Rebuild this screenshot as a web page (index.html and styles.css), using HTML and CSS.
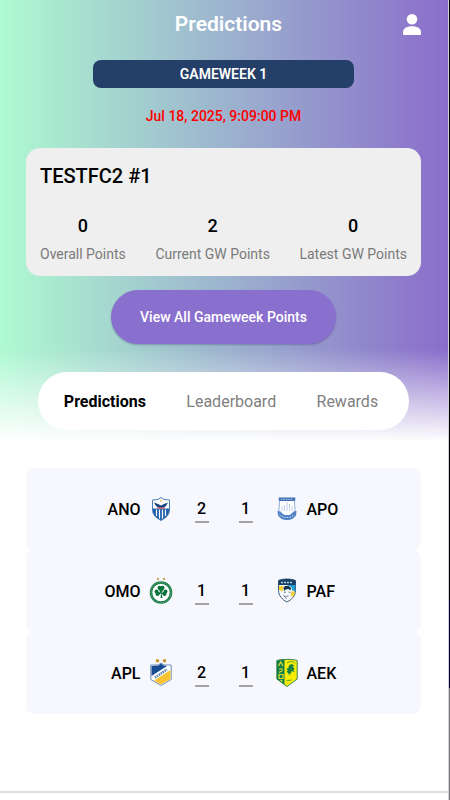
FILE: index.html
```
<!DOCTYPE html>
<html lang="en">
<head>
  <meta charset="UTF-8">
  <meta name="viewport" content="width=device-width, initial-scale=1">
  <title>Predictions</title>
  <link rel="stylesheet" href="styles.css">
</head>
<body>
  <div class="screen">
    <header class="hero">
      <div class="topbar">
        <h1 class="page-title">Predictions</h1>
        <a href="#profile" class="profile" aria-label="Profile">
          <svg width="18" height="21" viewBox="0 0 18 21" fill="#fff">
            <circle cx="9" cy="5.3" r="5.3"/>
            <path d="M0 20v-1.500C0 14.500 3.500 12.300 9 12.300s9 2.200 9 6.200V20q0 1-1 1H1q-1 0-1-1z"/>
          </svg>
        </a>
      </div>

      <div class="gameweek">GAMEWEEK 1</div>
      <time class="deadline">Jul 18, 2025, 9:09:00 PM</time>

      <section class="team-card">
        <h2 class="team-name">TESTFC2 #1</h2>
        <div class="stats">
          <div class="stat"><strong>0</strong><span>Overall Points</span></div>
          <div class="stat"><strong>2</strong><span>Current GW Points</span></div>
          <div class="stat"><strong>0</strong><span>Latest GW Points</span></div>
        </div>
      </section>

      <button class="view-all" type="button">View All Gameweek Points</button>

      <nav class="tabs">
        <button class="tab active" type="button">Predictions</button>
        <button class="tab" type="button">Leaderboard</button>
        <button class="tab" type="button">Rewards</button>
      </nav>
    </header>

    <main class="matches">
      <div class="match">
        <div class="team home">
          <span>ANO</span>
          <svg class="crest" viewBox="0 0 24 32">
            <path d="M12 4.500L15 6.500 20.500 7v10c0 5-4 8-8.500 10.500C7.500 25 3.500 22 3.500 17V7L9 6.500z" fill="#fff" stroke="#4d7cb8"/>
            <path d="M4 15.500h16V18c0 4-3.500 7-8 9.200C7.500 25 4 22 4 18z" fill="#1f5fac"/>
            <path d="M7.500 16.500v6.500M10.500 16.500v9M13.500 16.500v9M16.500 16.500v6.500" stroke="#fff" stroke-width="1.200"/>
            <path d="M5 9.500l4 1.500 3 1.500 3-1.500 4-1.500-2 3.500-3 2h-4l-3-2z" fill="#174582"/>
            <path d="M8 15h8" stroke="#d95d62" stroke-width="1.200"/>
            <circle cx="12" cy="7.800" r="1" fill="#efc54e"/>
          </svg>
        </div>
        <div class="scores">
          <input class="score" type="text" inputmode="numeric" value="2" aria-label="ANO score">
          <input class="score" type="text" inputmode="numeric" value="1" aria-label="APO score">
        </div>
        <div class="team away">
          <svg class="crest" viewBox="0 0 24 32">
            <path d="M4 6h16l-.5 3 .8 11c-1 4-4 5.800-8.300 6.500C8 25.800 4.800 24 3.700 20L4.500 9z" fill="#fff" stroke="#8fb0da"/>
            <path d="M3.500 4.500h17L19.600 8H4.400z" fill="#3d70b3"/>
            <path d="M6 6.300h12" stroke="#c9d8ec" stroke-dasharray="1.500 1"/>
            <path d="M12 9v9M9.500 12v6M14.500 11v7M7 13v5M17 13v5" stroke="#bdcfe6"/>
            <path d="M2.500 18l3 .5c2 3 4 3.500 6.500 3.500s4.500-.5 6.500-3.500l3-.5-.5 4.500c-2.500 3-5 4.500-9 4.500s-6.500-1.500-9-4.500z" fill="#4f82c4"/>
            <path d="M4.500 21.500c4 4 11 4 15 0" fill="none" stroke="#dce7f5" stroke-dasharray="1.500 1.200"/>
          </svg>
          <span>APO</span>
        </div>
      </div>

      <div class="match">
        <div class="team home">
          <span>OMO</span>
          <svg class="crest" viewBox="0 0 24 32">
            <circle cx="9" cy="4" r="1.200" fill="#c9a460"/>
            <circle cx="15" cy="4" r="1.200" fill="#c9a460"/>
            <circle cx="12" cy="17.500" r="10" fill="#fff" stroke="#167b45" stroke-width="2.600"/>
            <circle cx="12" cy="17.500" r="10" fill="none" stroke="#9cc8af" stroke-width="1" stroke-dasharray="1 1.500"/>
            <g fill="#08723b">
              <circle cx="10.500" cy="12.800" r="2"/><circle cx="13.500" cy="12.800" r="2"/>
              <circle cx="7.500" cy="16.500" r="2"/><circle cx="8.500" cy="19" r="2"/>
              <circle cx="16.500" cy="16.500" r="2"/><circle cx="15.500" cy="19" r="2"/>
              <path d="M9 13.500h6L12.500 18l4.500-2-1 4.500-3.500-2 1 4.500h-2l.5-4.500-4 2-1-4.500 4.500 1.500z"/>
            </g>
          </svg>
        </div>
        <div class="scores">
          <input class="score" type="text" inputmode="numeric" value="1" aria-label="OMO score">
          <input class="score" type="text" inputmode="numeric" value="1" aria-label="PAF score">
        </div>
        <div class="team away">
          <svg class="crest" viewBox="0 0 24 32">
            <path d="M3.500 5.500C8 3.500 16 3.500 20.500 5.500v10c0 5-3.500 9-8.500 11.500C7 24.500 3.500 20.500 3.500 15.500z" fill="#f5f8fb" stroke="#3c5b7b"/>
            <path d="M3.500 5.500C8 3.500 16 3.500 20.500 5.500V10H3.500z" fill="#173e64"/>
            <path d="M6 7.500h12" stroke="#b8d4df" stroke-width="1.500" stroke-dasharray="2 1"/>
            <path d="M12 10h8.200v7l-3-2-1-3z" fill="#1d9fd3"/>
            <path d="M4 10.500l5 1-1.500 5L4 15z" fill="#f5cf30"/>
            <path d="M17 16l3.200 1-2.200 5-2.500-1.500z" fill="#f5cf30"/>
            <path d="M8.500 13c1-3 6.500-3 7.500.5l-.5 2-2-1.500-3 .5-1 2z" fill="#183450"/>
            <path d="M9 17.500l2-.5M13.500 17l2 .5M10.500 21.500l3-.5M8.500 20l3 4" fill="none" stroke="#48647d" stroke-width=".8"/>
          </svg>
          <span>PAF</span>
        </div>
      </div>

      <div class="match">
        <div class="team home">
          <span>APL</span>
          <svg class="crest" viewBox="0 0 24 32">
            <circle cx="8.500" cy="3.800" r="1.800" fill="#c69531"/>
            <circle cx="15.500" cy="3.800" r="1.800" fill="#c69531"/>
            <path d="M12 6l3 2h7.200v14.500L12 28.500 1.800 22.500V8H9z" fill="#fff" stroke="#6d8db7"/>
            <path d="M12 6.500L14.500 8.500 18 9 2.500 19V9l7-.5z" fill="#174b92"/>
            <path d="M21.500 13v9L12 27.500 5 23.500z" fill="#fac331"/>
            <path d="M6 20.500L18 12.500" stroke="#597eae" stroke-width="2.400" stroke-dasharray="1.500 .8"/>
          </svg>
        </div>
        <div class="scores">
          <input class="score" type="text" inputmode="numeric" value="2" aria-label="APL score">
          <input class="score" type="text" inputmode="numeric" value="1" aria-label="AEK score">
        </div>
        <div class="team away">
          <svg class="crest" viewBox="0 0 24 32">
            <path d="M1.800 3.500C6 2 18 2 22.200 3.500v18.500L12 29.500 1.800 22z" fill="#f8ec09" stroke="#398651"/>
            <path d="M2 3.500l7.500-1v25L2 22z" fill="#127d4a"/>
            <path d="M3.500 9l2.200-4 2.300 4M4 12h4M4 15.500l3.500-2M4 17.500h4v4H4zM5.500 23l2 1.500" fill="none" stroke="#dfe12b" stroke-width="1.200"/>
            <path d="M11.500 12l2-1.500.5-2 2.500-1.500 3 1.500-2 1 2 2-1 1.500 1 2-3-1-.5 3-1.500-1v3l-1.500-3-1.500-1.500 1.500-1z" fill="#198146"/>
            <path d="M12 6c3-2 6-2 8 .5M11.500 24c2-1.500 3 0 5-1" fill="none" stroke="#599c35"/>
          </svg>
          <span>AEK</span>
        </div>
      </div>
    </main>

    <footer class="bottom-bar"></footer>
  </div>
</body>
</html>
```

FILE: styles.css
```
* {
  box-sizing: border-box;
}

body {
  margin: 0;
  padding-right: 1px;
  background: linear-gradient(to bottom, #000 0 75%, #00003c 75% 86%, #777 86%);
  font-family: Roboto, "Liberation Sans", sans-serif;
  color: #000;
}

button,
input {
  font-family: inherit;
  border: none;
}

button {
  cursor: pointer;
}

.screen {
  display: flex;
  flex-direction: column;
  min-height: 100vh;
  background: #fff;
  border-right: 1px solid #d4d0de;
}

.hero {
  display: flex;
  flex-direction: column;
  align-items: center;
  padding: 8px 27px 12px 26px;
  background:
    linear-gradient(to bottom, rgba(255, 255, 255, 0) 79%, #fff 100%),
    linear-gradient(to right, #aefad1, #8a6dcb);
}

.topbar {
  display: grid;
  grid-template-columns: 1fr auto 1fr;
  align-items: center;
  width: 100%;
  height: 32px;
  padding-left: 10px;
}

.page-title {
  grid-column: 2;
  margin: 0;
  font-size: 21px;
  font-weight: 600;
  color: #fff;
}

.profile {
  display: flex;
  justify-self: end;
}

.gameweek {
  width: 66%;
  margin-top: 20px;
  border-radius: 8px;
  background: #244069;
  color: #fff;
  font-size: 14px;
  font-weight: 600;
  line-height: 28px;
  text-align: center;
}

.deadline {
  margin-top: 18px;
  color: #f00;
  font-size: 14px;
  font-weight: 500;
  line-height: 20px;
}

.team-card {
  width: 100%;
  margin-top: 22px;
  padding: 16px 14px 12px;
  border-radius: 14px;
  background: #efefef;
}

.team-name {
  margin: 0;
  font-size: 20px;
  font-weight: 500;
  line-height: 24px;
}

.stats {
  display: flex;
  justify-content: space-between;
  margin-top: 26px;
}

.stat {
  display: flex;
  flex-direction: column;
  align-items: center;
  gap: 6px;
}

.stat strong {
  font-size: 18px;
  font-weight: 500;
  line-height: 24px;
}

.stat span {
  color: #7a7a7a;
  font-size: 14px;
  line-height: 20px;
}

.view-all {
  width: 57%;
  height: 54px;
  margin-top: 14px;
  border-radius: 27px;
  background: #8a70ce;
  box-shadow: 0 1px 2px rgba(40, 30, 90, 0.3);
  color: #fff;
  font-size: 14px;
  font-weight: 500;
}

.tabs {
  display: flex;
  justify-content: space-between;
  align-items: center;
  width: 94%;
  height: 58px;
  margin-top: 28px;
  padding: 0 31px 0 26px;
  border-radius: 29px;
  background: #fff;
}

.tab {
  padding: 0;
  background: none;
  color: #808080;
  font-size: 16px;
}

.tab.active {
  color: #000;
  font-weight: 700;
}

.matches {
  flex: 1;
  padding: 26px 27px 0 26px;
}

.match {
  display: grid;
  grid-template-columns: 1fr auto 1fr;
  align-items: center;
  column-gap: 22px;
  height: 82px;
  border-radius: 8px;
  background: #f7f8fe;
}

.team {
  display: flex;
  align-items: center;
  gap: 8px;
  font-size: 16px;
  font-weight: 500;
}

.home {
  justify-content: flex-end;
}

.crest {
  width: 24px;
  height: 32px;
}

.scores {
  display: flex;
  gap: 30px;
}

.score {
  width: 14px;
  height: 28px;
  padding: 0;
  border-bottom: 2px solid #a3a3a3;
  border-radius: 0;
  background: none;
  font-size: 16px;
  font-weight: 500;
  text-align: center;
}

.bottom-bar {
  height: 9px;
  border-top: 2px solid #dddee4;
}
```
